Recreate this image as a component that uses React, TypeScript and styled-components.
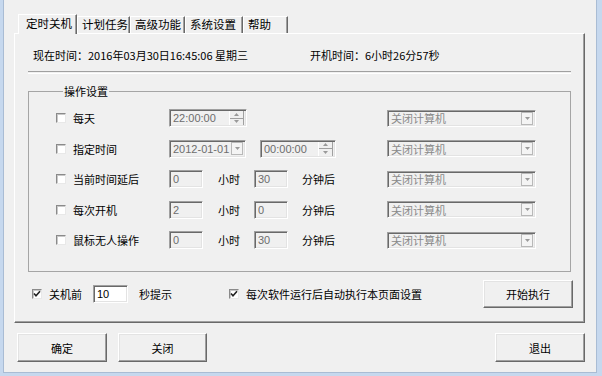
import React from "react";
import styled, {createGlobalStyle} from "styled-components";

const GlobalStyle = createGlobalStyle`
  html, body {
    margin: 0;
    padding: 0;
    background: #f0f0f0;
  }
  body {
    font-family: "Noto Sans CJK SC", "Liberation Sans", sans-serif;
    font-size: 11px;
    color: #000;
  }
`

const Window = styled.div`
  width: 602px;
  height: 376px;
  box-sizing: border-box;
  background: #f0f0f0;
  border-left: 3px solid #c6d8ee;
  border-right: 5px solid #c6d8ee;
  border-bottom: 3px solid #c6d8ee;
  box-shadow: inset 1px 0 0 #a9bcd4, inset -1px -1px 0 #a9bcd4;
  padding: 14px 12px 0 11px;
  display: flex;
  flex-direction: column;
`

const TabStrip = styled.div`
  display: flex;
  align-items: flex-end;
  height: 19px;
  padding-left: 4px;
  position: relative;
  z-index: 1;
`

const Tab = styled.div<{ $active?: boolean; $w: number }>`
  box-sizing: border-box;
  width: ${p => p.$w}px;
  height: ${p => p.$active ? 20 : 17}px;
  margin-bottom: ${p => p.$active ? -1 : 0}px;
  padding-left: ${p => p.$active ? 7 : 4}px;
  line-height: ${p => p.$active ? 17 : 15}px;
  font-size: 11.5px;
  background: #f0f0f0;
  border-top: 1px solid #fff;
  border-left: 1px solid #fff;
  border-right: 1px solid #696969;
  box-shadow: inset -1px 0 0 #a0a0a0;
  white-space: nowrap;
`

const Panel = styled.div`
  box-sizing: border-box;
  height: 290px;
  border-top: 1px solid #fff;
  border-left: 1px solid #fff;
  border-right: 1px solid #696969;
  border-bottom: 1px solid #696969;
  box-shadow: inset -1px -1px 0 #a0a0a0;
  padding: 0 13px 0 13px;
  display: flex;
  flex-direction: column;
`

const InfoRow = styled.div`
  display: flex;
  margin-top: 13px;
  height: 16px;
  line-height: 16px;
  padding-left: 5px;
`

const InfoText = styled.span<{ $w?: number }>`
  width: ${p => p.$w ? `${p.$w}px` : "auto"};
  white-space: nowrap;
`

const Etched = styled.div`
  margin-top: 8px;
  height: 1px;
  border-top: 1px solid #a0a0a0;
  border-bottom: 1px solid #fff;
`

const GroupBox = styled.fieldset`
  margin: 9px 0 0 0;
  padding: 10px 0 22px 27px;
  border: 1px solid #a5a5a5;
  display: flex;
  flex-direction: column;
  gap: 12.5px;
  min-width: 0;
`

const Legend = styled.legend`
  margin-left: 7px;
  padding: 0 1px;
  line-height: 16px;
`

const Row = styled.div`
  display: flex;
  align-items: center;
  height: 18px;
`

const CheckCell = styled.div`
  width: 113px;
  display: flex;
  align-items: center;
  gap: 7px;
  white-space: nowrap;
`

const CheckBox = styled.span`
  box-sizing: border-box;
  width: 10px;
  height: 10px;
  background: #fff;
  border-top: 1px solid #8a8a8a;
  border-left: 1px solid #8a8a8a;
  border-right: 1px solid #e8e8e8;
  border-bottom: 1px solid #e8e8e8;
  box-shadow: inset 1px 1px 0 #c8c8c8;
  display: inline-flex;
  align-items: center;
  justify-content: center;
  flex: none;
`

const FieldArea = styled.div`
  width: 218px;
  display: flex;
  align-items: center;
`

const Sunken = styled.div<{ $w: number; $enabled?: boolean; $ml?: number }>`
  box-sizing: border-box;
  width: ${p => p.$w}px;
  height: 18px;
  margin-left: ${p => p.$ml ?? 0}px;
  background: ${p => p.$enabled ? "#fff" : "#f0f0f0"};
  border-top: 1px solid #a0a0a0;
  border-left: 1px solid #a0a0a0;
  border-right: 1px solid #fff;
  border-bottom: 1px solid #fff;
  box-shadow: inset 1px 1px 0 #696969, inset -1px -1px 0 #e3e3e3;
  display: flex;
  align-items: center;
  padding: 0 2px 0 3px;
  font-family: "Liberation Sans", "Noto Sans CJK SC", sans-serif;
  font-size: 11px;
  color: ${p => p.$enabled ? "#000" : "#6d6d6d"};
  flex: none;
`

const FieldText = styled.span`
  flex: 1;
  white-space: nowrap;
  overflow: hidden;
`

const Spinner = styled.div`
  width: 14px;
  height: 14px;
  display: flex;
  flex-direction: column;
  border-left: 1px solid #fff;
`

const SpinHalf = styled.div<{ $top?: boolean }>`
  flex: 1;
  display: flex;
  align-items: center;
  justify-content: center;
  border-bottom: ${p => p.$top ? "1px solid #a0a0a0" : "none"};
  border-right: 1px solid #a0a0a0;
`

const ArrowBtn = styled.div`
  box-sizing: border-box;
  width: 12px;
  height: 13px;
  border: 1px solid #b8b8b8;
  background: #f4f4f4;
  display: flex;
  align-items: center;
  justify-content: center;
  flex: none;
`

const Unit = styled.span<{ $ml: number }>`
  margin-left: ${p => p.$ml}px;
  white-space: nowrap;
`

const Combo = styled(Sunken)`
  height: 17px;
  font-family: "Noto Sans CJK SC", sans-serif;
  font-size: 11px;
  color: #8a8a8a;
`

const BottomRow = styled.div`
  display: flex;
  align-items: center;
  height: 28px;
  margin-top: 8px;
  padding-left: 4px;
  margin-right: -2px;
`

const Gap = styled.span<{ $w: number }>`
  width: ${p => p.$w}px;
  flex: none;
`

const Button = styled.div<{ $w: number; $h?: number }>`
  box-sizing: border-box;
  width: ${p => p.$w}px;
  height: ${p => p.$h ?? 29}px;
  background: #f0f0f0;
  border-top: 1px solid #fff;
  border-left: 1px solid #fff;
  border-right: 1px solid #696969;
  border-bottom: 1px solid #696969;
  box-shadow: inset -1px -1px 0 #a0a0a0, inset 1px 1px 0 #e3e3e3;
  display: flex;
  align-items: center;
  justify-content: center;
  flex: none;
`

const ButtonBar = styled.div`
  display: flex;
  align-items: center;
  margin-top: 10px;
  padding-left: 3px;
  gap: 11px;
`

const Spacer = styled.div`
  flex: 1;
`

const Tri = ({down}: { down?: boolean }) => (
    <svg width="5" height="3" viewBox="0 0 5 3">
        <path d={down ? "M0 0H5L2.5 3Z" : "M0 3H5L2.5 0Z"} fill="#9a9a9a"/>
    </svg>
)

const Check = () => (
    <svg width="8" height="8" viewBox="0 0 8 8">
        <path d="M1 3.5L3 5.8L7 1.2" stroke="#222" strokeWidth="1.6" fill="none"/>
    </svg>
)

const SpinBox = () => (
    <Spinner>
        <SpinHalf $top><Tri/></SpinHalf>
        <SpinHalf><Tri down/></SpinHalf>
    </Spinner>
)

const ComboBox = () => (
    <Combo $w={149}>
        <FieldText>关闭计算机</FieldText>
        <ArrowBtn><Tri down/></ArrowBtn>
    </Combo>
)

const delayRows = [
    {label: "当前时间延后", h: "0", m: "30"},
    {label: "每次开机", h: "2", m: "0"},
    {label: "鼠标无人操作", h: "0", m: "30"},
]

export default function App() {
    return (
        <>
            <GlobalStyle/>
            <Window>
                <TabStrip>
                    <Tab $active $w={59}>定时关机</Tab>
                    <Tab $w={53}>计划任务</Tab>
                    <Tab $w={55}>高级功能</Tab>
                    <Tab $w={58}>系统设置</Tab>
                    <Tab $w={45}>帮助</Tab>
                </TabStrip>
                <Panel>
                    <InfoRow>
                        <InfoText $w={277}>现在时间：2016年03月30日16:45:06 星期三</InfoText>
                        <InfoText>开机时间：6小时26分57秒</InfoText>
                    </InfoRow>
                    <Etched/>
                    <GroupBox>
                        <Legend>操作设置</Legend>
                        <Row>
                            <CheckCell><CheckBox/>每天</CheckCell>
                            <FieldArea>
                                <Sunken $w={78}><FieldText>22:00:00</FieldText><SpinBox/></Sunken>
                            </FieldArea>
                            <ComboBox/>
                        </Row>
                        <Row>
                            <CheckCell><CheckBox/>指定时间</CheckCell>
                            <FieldArea>
                                <Sunken $w={77}><FieldText>2012-01-01</FieldText><ArrowBtn><Tri down/></ArrowBtn></Sunken>
                                <Sunken $w={76} $ml={14}><FieldText>00:00:00</FieldText><SpinBox/></Sunken>
                            </FieldArea>
                            <ComboBox/>
                        </Row>
                        {delayRows.map(r => (
                            <Row key={r.label}>
                                <CheckCell><CheckBox/>{r.label}</CheckCell>
                                <FieldArea>
                                    <Sunken $w={34}><FieldText>{r.h}</FieldText></Sunken>
                                    <Unit $ml={15}>小时</Unit>
                                    <Sunken $w={34} $ml={14}><FieldText>{r.m}</FieldText></Sunken>
                                    <Unit $ml={14}>分钟后</Unit>
                                </FieldArea>
                                <ComboBox/>
                            </Row>
                        ))}
                    </GroupBox>
                    <BottomRow>
                        <CheckBox><Check/></CheckBox>
                        <Gap $w={7}/>
                        <span>关机前</span>
                        <Gap $w={11}/>
                        <Sunken $w={35} $enabled><FieldText>10</FieldText></Sunken>
                        <Gap $w={11}/>
                        <span>秒提示</span>
                        <Gap $w={57}/>
                        <CheckBox><Check/></CheckBox>
                        <Gap $w={7}/>
                        <span>每次软件运行后自动执行本页面设置</span>
                        <Spacer/>
                        <Button $w={90} $h={28}>开始执行</Button>
                    </BottomRow>
                </Panel>
                <ButtonBar>
                    <Button $w={90}>确定</Button>
                    <Button $w={89}>关闭</Button>
                    <Spacer/>
                    <Button $w={90}>退出</Button>
                </ButtonBar>
            </Window>
        </>
    )
}
